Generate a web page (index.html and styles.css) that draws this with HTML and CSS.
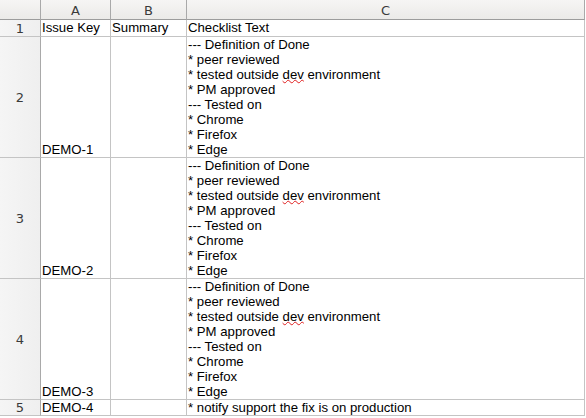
FILE: index.html
```html
<!DOCTYPE html>
<html>
<head>
<meta charset="utf-8">
<link rel="stylesheet" href="styles.css">
</head>
<body>
<div class="sheet">
  <div class="corner"></div>
  <div class="colhead">A</div>
  <div class="colhead">B</div>
  <div class="colhead">C</div>

  <div class="rowhead">1</div>
  <div class="cell">Issue Key</div>
  <div class="cell">Summary</div>
  <div class="cell">Checklist Text</div>

  <div class="rowhead tall">2</div>
  <div class="cell bottom">DEMO-1</div>
  <div class="cell"></div>
  <div class="cell">--- Definition of Done<br>* peer reviewed<br>* tested outside <span class="spell">dev</span> environment<br>* PM approved<br>--- Tested on<br>* Chrome<br>* Firefox<br>* Edge</div>

  <div class="rowhead tall">3</div>
  <div class="cell bottom">DEMO-2</div>
  <div class="cell"></div>
  <div class="cell">--- Definition of Done<br>* peer reviewed<br>* tested outside <span class="spell">dev</span> environment<br>* PM approved<br>--- Tested on<br>* Chrome<br>* Firefox<br>* Edge</div>

  <div class="rowhead tall">4</div>
  <div class="cell bottom">DEMO-3</div>
  <div class="cell"></div>
  <div class="cell">--- Definition of Done<br>* peer reviewed<br>* tested outside <span class="spell">dev</span> environment<br>* PM approved<br>--- Tested on<br>* Chrome<br>* Firefox<br>* Edge</div>

  <div class="rowhead">5</div>
  <div class="cell">DEMO-4</div>
  <div class="cell"></div>
  <div class="cell">* notify support the fix is on production</div>
</div>
</body>
</html>
```
FILE: styles.css
```css
html, body {
  margin: 0;
  padding: 0;
  background: #ffffff;
}
.sheet {
  display: grid;
  grid-template-columns: 41px 70px 76px 398px;
  grid-template-rows: 20px 17px 121px 121px 121px 16px;
  font-family: "Liberation Sans", Arial, sans-serif;
  font-size: 13.2px;
  line-height: 15px;
  color: #000;
}
.corner, .colhead {
  box-sizing: border-box;
  background: linear-gradient(#f6f5f4, #ebeae8);
  border-right: 1px solid #a9a9a9;
  border-bottom: 1px solid #9c9c9c;
}
.colhead {
  display: flex;
  align-items: center;
  justify-content: center;
  font-family: "DejaVu Sans", sans-serif;
  font-size: 13px;
  color: #3a3a3a;
  padding-top: 1px;
}
.rowhead {
  box-sizing: border-box;
  background: linear-gradient(90deg, #f5f5f5, #efefef);
  border-right: 1px solid #a9a9a9;
  border-bottom: 1px solid #c4c4c4;
  display: flex;
  align-items: center;
  justify-content: center;
  font-family: "DejaVu Sans", sans-serif;
  font-size: 13px;
  color: #3a3a3a;
}
.cell {
  box-sizing: border-box;
  border-right: 1px solid #c4c4c4;
  border-bottom: 1px solid #c4c4c4;
  padding-left: 1px;
  white-space: nowrap;
  overflow: hidden;
}
.cell.bottom {
  display: flex;
  align-items: flex-end;
}
.spell {
  text-decoration: underline wavy #e02020;
  text-decoration-thickness: 1px;
  text-underline-offset: 0px;
}
```
